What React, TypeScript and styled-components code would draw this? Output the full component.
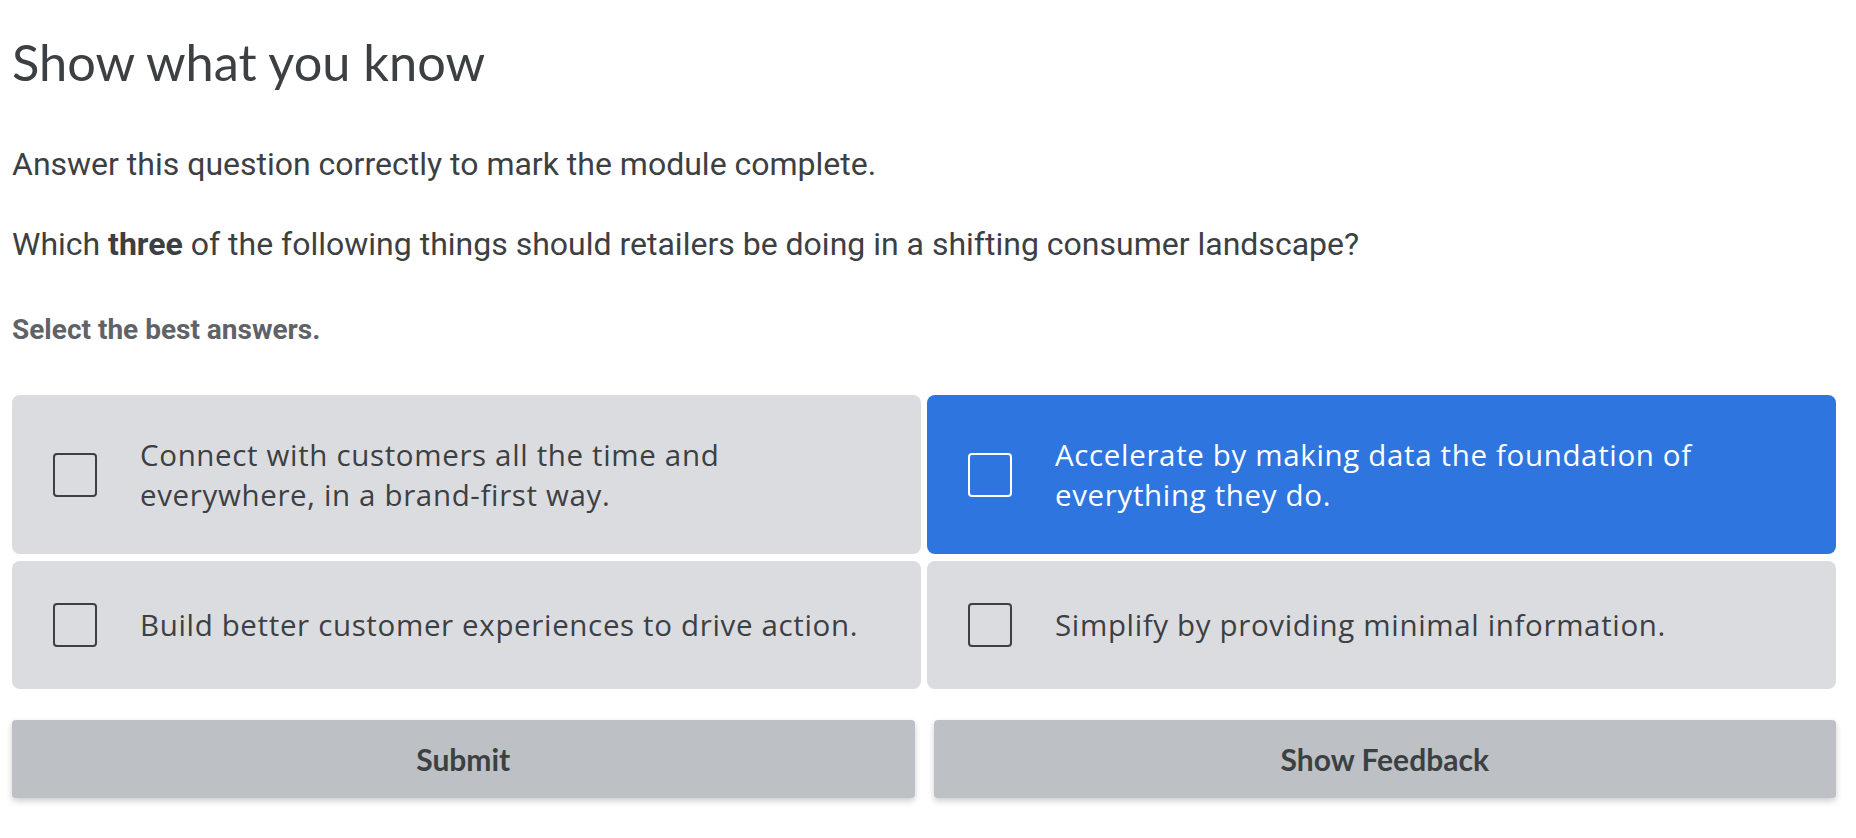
import React, { useState } from "react";
import styled, { createGlobalStyle } from "styled-components";

const GlobalStyle = createGlobalStyle`
  html, body {
    margin: 0;
    padding: 0;
    background: #ffffff;
  }
  * {
    box-sizing: border-box;
  }
`;

const Page = styled.div`
  padding: 0 20px 40px 12px;
  color: #3c4043;
  font-family: Roboto, "Liberation Sans", sans-serif;
`;

const Title = styled.h1`
  margin: 0;
  padding-top: 30px;
  font-family: Lato, "Open Sans", sans-serif;
  font-weight: 400;
  font-size: 50.5px;
  line-height: 64px;
  color: #3c4043;
`;

const Intro = styled.p`
  margin: 0;
  padding-top: 50px;
  font-size: 32px;
  line-height: 40px;
`;

const Question = styled.p`
  margin: 0;
  padding-top: 40px;
  font-size: 32px;
  line-height: 40px;

  b {
    font-weight: 700;
  }
`;

const Hint = styled.p`
  margin: 0;
  padding-top: 50px;
  font-size: 28px;
  line-height: 32px;
  font-weight: 700;
  color: #5f6368;
`;

const Options = styled.div`
  margin-top: 49px;
  display: grid;
  grid-template-columns: 1fr 1fr;
  gap: 7px 6px;
`;

const Option = styled.label<{ $active: boolean }>`
  display: flex;
  align-items: center;
  gap: 43px;
  padding: 40px 40px 40px 41px;
  border-radius: 8px;
  background: ${(p) => (p.$active ? "#2e75e0" : "#dbdce0")};
  color: ${(p) => (p.$active ? "#ffffff" : "#3c4043")};
  cursor: pointer;
`;

const Box = styled.span<{ $active: boolean }>`
  flex: none;
  width: 44px;
  height: 44px;
  margin: 2px 0;
  border: 2.5px solid ${(p) => (p.$active ? "#ffffff" : "#3c4043")};
  border-radius: 4px;
`;

const OptionText = styled.span`
  font-family: "Open Sans", Lato, sans-serif;
  font-size: 29.5px;
  letter-spacing: 0.65px;
  line-height: 39.5px;
`;

const Actions = styled.div`
  margin-top: 31px;
  display: grid;
  grid-template-columns: 1fr 1fr;
  gap: 19px;
`;

const ActionButton = styled.button`
  height: 78px;
  border: none;
  border-radius: 4px;
  background: #bdc0c4;
  box-shadow: 0 3px 6px rgba(0, 0, 0, 0.2);
  font-family: Lato, "Open Sans", sans-serif;
  font-weight: 700;
  font-size: 30px;
  color: #3c4043;
  cursor: pointer;
`;

const options = [
  "Connect with customers all the time and everywhere, in a brand-first way.",
  "Accelerate by making data the foundation of everything they do.",
  "Build better customer experiences to drive action.",
  "Simplify by providing minimal information.",
];

export default function App() {
  const [active] = useState(1);
  return (
    <>
      <GlobalStyle />
      <Page>
        <Title>Show what you know</Title>
        <Intro>Answer this question correctly to mark the module complete.</Intro>
        <Question>
          Which <b>three</b> of the following things should retailers be doing
          in a shifting consumer landscape?
        </Question>
        <Hint>Select the best answers.</Hint>
        <Options>
          {options.map((text, i) => (
            <Option key={text} $active={i === active}>
              <Box $active={i === active} />
              <OptionText>{text}</OptionText>
            </Option>
          ))}
        </Options>
        <Actions>
          <ActionButton>Submit</ActionButton>
          <ActionButton>Show Feedback</ActionButton>
        </Actions>
      </Page>
    </>
  );
}
